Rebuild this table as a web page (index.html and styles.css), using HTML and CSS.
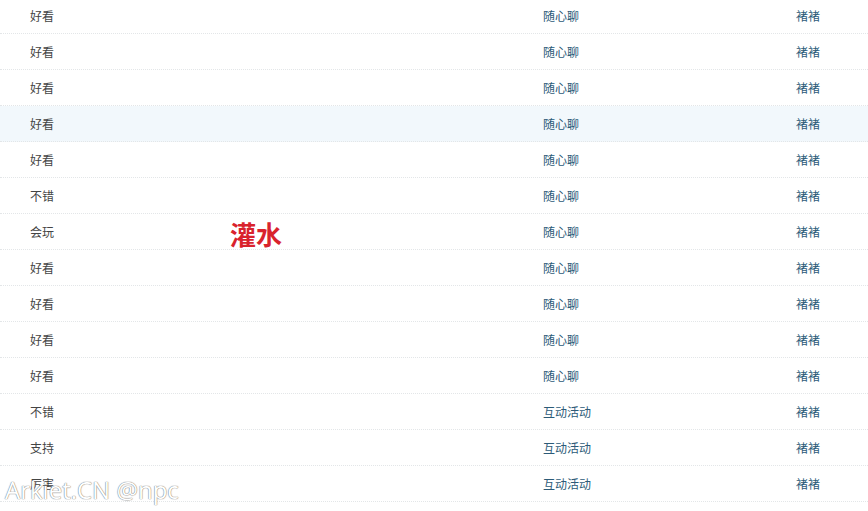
FILE: index.html
```html
<!DOCTYPE html>
<html lang="zh-CN">
<head>
<meta charset="UTF-8">
<title>帖子列表</title>
<link rel="stylesheet" href="styles.css">
</head>
<body>
<div class="list">
    <div class="row"><div class="title">好看</div><div class="forum">随心聊</div><div class="author">褚褚</div></div>
    <div class="row"><div class="title">好看</div><div class="forum">随心聊</div><div class="author">褚褚</div></div>
    <div class="row"><div class="title">好看</div><div class="forum">随心聊</div><div class="author">褚褚</div></div>
    <div class="row hover"><div class="title">好看</div><div class="forum">随心聊</div><div class="author">褚褚</div></div>
    <div class="row"><div class="title">好看</div><div class="forum">随心聊</div><div class="author">褚褚</div></div>
    <div class="row"><div class="title">不错</div><div class="forum">随心聊</div><div class="author">褚褚</div></div>
    <div class="row"><div class="title">会玩<span class="tag">灌水</span></div><div class="forum">随心聊</div><div class="author">褚褚</div></div>
    <div class="row"><div class="title">好看</div><div class="forum">随心聊</div><div class="author">褚褚</div></div>
    <div class="row"><div class="title">好看</div><div class="forum">随心聊</div><div class="author">褚褚</div></div>
    <div class="row"><div class="title">好看</div><div class="forum">随心聊</div><div class="author">褚褚</div></div>
    <div class="row"><div class="title">好看</div><div class="forum">随心聊</div><div class="author">褚褚</div></div>
    <div class="row"><div class="title">不错</div><div class="forum">互动活动</div><div class="author">褚褚</div></div>
    <div class="row"><div class="title">支持</div><div class="forum">互动活动</div><div class="author">褚褚</div></div>
    <div class="row"><div class="title">厉害</div><div class="forum">互动活动</div><div class="author">褚褚</div></div>
</div>
<div class="watermark">Arkiet.CN @npc</div>
</body>
</html>
```

FILE: styles.css
```css
body {
    margin: 0;
    background-color: #fff;
    font-family: "Noto Sans CJK SC", "Liberation Sans", sans-serif;
    font-size: 12px;
    overflow: hidden;
}

.list {
    margin-top: -2px;
}

.row {
    display: grid;
    grid-template-columns: 543px 253px 1fr;
    align-items: center;
    height: 35px;
    border-bottom: 1px dotted #e3e6e8;
}

.row.hover {
    background-color: #f2f8fc;
}

.title {
    display: flex;
    align-items: center;
    padding-left: 30px;
    color: #444;
}

.tag {
    margin: 2px 0 -2px 176px;
    line-height: 26px;
    color: #d9232d;
    font-size: 26px;
    font-weight: bold;
}

.forum, .author {
    color: #2c5b78;
}

.watermark {
    position: absolute;
    left: 5px;
    top: 473px;
    font-family: "Open Sans", "Liberation Sans", sans-serif;
    font-size: 24px;
    color: #fff;
    text-shadow: 0 0 1px #777, 0 0 1px #777;
}
```
